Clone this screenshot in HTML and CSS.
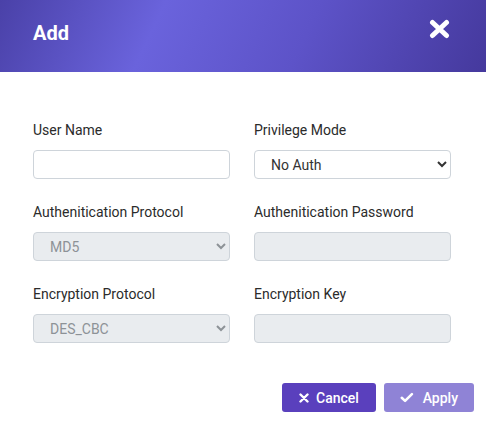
FILE: index.html
```html
<!DOCTYPE html>
<html>
<head>
<meta charset="utf-8">
<link rel="stylesheet" href="styles.css">
</head>
<body>
<div class="modal">
  <header class="modal-header">
    <h1 class="modal-title">Add</h1>
    <button class="close" aria-label="Close">
      <svg width="21" height="20" viewBox="0 0 21 20"><path d="M3.5 3.5 L17.5 16.5 M17.5 3.5 L3.5 16.5" stroke="#fff" stroke-width="5" stroke-linecap="round"/></svg>
    </button>
  </header>
  <div class="modal-body">
    <div class="form-grid">
      <div class="field">
        <label class="field-label">User Name</label>
        <input class="control" type="text">
      </div>
      <div class="field">
        <label class="field-label">Privilege Mode</label>
        <select class="control select"><option>No Auth</option></select>
      </div>
      <div class="field">
        <label class="field-label">Authenitication Protocol</label>
        <select class="control select" disabled><option>MD5</option></select>
      </div>
      <div class="field">
        <label class="field-label">Authenitication Password</label>
        <input class="control" type="password" disabled>
      </div>
      <div class="field">
        <label class="field-label">Encryption Protocol</label>
        <select class="control select" disabled><option>DES_CBC</option></select>
      </div>
      <div class="field">
        <label class="field-label">Encryption Key</label>
        <input class="control" type="text" disabled>
      </div>
    </div>
  </div>
  <footer class="modal-footer">
    <button class="btn btn-cancel">
      <svg width="10" height="10" viewBox="0 0 10 10"><path d="M1.5 1.5 L8.5 8.5 M8.5 1.5 L1.5 8.5" stroke="#fff" stroke-width="2.4" stroke-linecap="round"/></svg>
      <span>Cancel</span>
    </button>
    <button class="btn btn-apply">
      <svg width="14" height="11" viewBox="0 0 14 11"><path d="M1.8 5.8 L5.2 9 L12.2 2" fill="none" stroke="#fff" stroke-width="2.6" stroke-linecap="round" stroke-linejoin="round"/></svg>
      <span>Apply</span>
    </button>
  </footer>
</div>
</body>
</html>
```

FILE: styles.css
```css
html, body {
  margin: 0;
  padding: 0;
  background: #fff;
}
body {
  font-family: Roboto, "Liberation Sans", Arial, sans-serif;
  color: #333;
}
.modal {
  width: 486px;
  height: 421px;
  background: #fff;
  overflow: hidden;
}
.modal-header {
  height: 72px;
  box-sizing: border-box;
  padding: 19px 36px 0 33px;
  display: flex;
  justify-content: space-between;
  align-items: flex-start;
  background: linear-gradient(115deg, #4a41a8 0%, #6a63dc 32%, #5d53c8 62%, #45399d 100%);
}
.modal-title {
  margin: 2px 0 0;
  font-size: 20px;
  line-height: 24px;
  font-weight: 700;
  color: #fff;
}
.close {
  margin: 0;
  padding: 0;
  border: 0;
  background: none;
  width: 21px;
  height: 20px;
  display: block;
}
.close svg { display: block; }
.modal-body {
  padding: 48px 35px 0 33px;
}
.form-grid {
  display: grid;
  grid-template-columns: 197px 197px;
  column-gap: 24px;
  row-gap: 23px;
}
.field {
  display: flex;
  flex-direction: column;
}
.field-label {
  font-size: 14px;
  line-height: 20px;
  font-weight: 400;
  color: #2b2b2b;
  margin-bottom: 10px;
}
.control {
  box-sizing: border-box;
  width: 197px;
  height: 29px;
  margin: 0;
  border: 1px solid #ced4da;
  border-radius: 4px;
  background-color: #fff;
  font-family: Roboto, "Liberation Sans", Arial, sans-serif;
  font-size: 14px;
  color: #333;
  padding: 0 12px;
}
.select {
  padding: 0 4px 0 12px;
}
.control:disabled {
  background-color: #e9ecef;
  color: #8d9297;
  opacity: 1;
}
.modal-footer {
  display: flex;
  justify-content: flex-end;
  gap: 8px;
  padding: 40px 12px 0 0;
}
.btn {
  height: 29px;
  border: 0;
  border-radius: 3px;
  color: #fff;
  font-family: Roboto, "Liberation Sans", Arial, sans-serif;
  font-size: 14px;
  font-weight: 500;
  display: flex;
  align-items: center;
  gap: 7px;
  padding: 0 17px;
  margin: 0;
}
.btn svg { display: block; }
.btn-cancel {
  background: #5a40bd;
  width: 94px;
}
.btn-apply {
  background: #8f83d6;
  width: 90px;
  gap: 9px;
  padding: 0 16px;
}
```
